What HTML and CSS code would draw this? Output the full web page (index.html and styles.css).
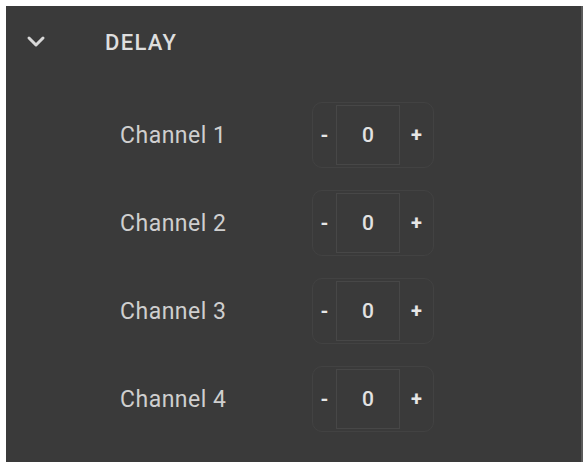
FILE: index.html
```html
<!DOCTYPE html>
<html lang="en">
<head>
<meta charset="utf-8">
<title>Delay</title>
<link rel="stylesheet" href="styles.css">
</head>
<body>
<section class="panel">
  <header class="panel-head">
    <svg class="chevron" width="20" height="14" viewBox="0 0 20 14" aria-hidden="true">
      <polyline points="3,3 10,10 17,3" fill="none" stroke="#d8d8d8" stroke-width="3" stroke-linecap="round" stroke-linejoin="round"/>
    </svg>
    <span class="panel-title">DELAY</span>
  </header>
  <div class="channels">
    <div class="channel">
      <span class="channel-name">Channel 1</span>
      <div class="stepper"><button class="step minus">-</button><span class="value">0</span><button class="step plus">+</button></div>
    </div>
    <div class="channel">
      <span class="channel-name">Channel 2</span>
      <div class="stepper"><button class="step minus">-</button><span class="value">0</span><button class="step plus">+</button></div>
    </div>
    <div class="channel">
      <span class="channel-name">Channel 3</span>
      <div class="stepper"><button class="step minus">-</button><span class="value">0</span><button class="step plus">+</button></div>
    </div>
    <div class="channel">
      <span class="channel-name">Channel 4</span>
      <div class="stepper"><button class="step minus">-</button><span class="value">0</span><button class="step plus">+</button></div>
    </div>
  </div>
</section>
</body>
</html>
```
FILE: styles.css
```css
html, body {
  margin: 0;
  padding: 0;
  background: #ffffff;
  height: 100%;
  overflow: hidden;
}

body {
  padding: 6px 2px 0 6px;
  box-sizing: border-box;
  font-family: Roboto, "Liberation Sans", sans-serif;
}

.panel {
  background: #3a3a3a;
  height: 100%;
  border-right: 2px solid #5a5a5a;
  box-sizing: border-box;
}

.panel-head {
  height: 72px;
  display: flex;
  align-items: center;
  padding-left: 20px;
}

.chevron {
  display: block;
}

.panel-title {
  margin-left: 59px;
  font-size: 22px;
  font-weight: 500;
  color: #dedede;
  letter-spacing: 1.3px;
}

.channels {
  padding-top: 13px;
}

.channel {
  height: 88px;
  display: flex;
  align-items: center;
  padding-left: 114px;
}

.channel-name {
  width: 192px;
  font-size: 23px;
  color: #cfcfcf;
  letter-spacing: 0.5px;
}

.stepper {
  display: flex;
  align-items: center;
  height: 66px;
  border: 1px solid #424242;
  border-radius: 10px;
  box-sizing: border-box;
}

.step {
  background: none;
  border: none;
  padding: 0;
  font-family: inherit;
  font-size: 20px;
  font-weight: 700;
  color: #e6e6e6;
  height: 100%;
  cursor: pointer;
}

.minus {
  width: 23px;
}

.plus {
  width: 33px;
}

.value {
  width: 64px;
  height: 60px;
  box-sizing: border-box;
  border: 1px solid #474747;
  display: flex;
  align-items: center;
  justify-content: center;
  font-size: 21px;
  font-weight: 500;
  color: #e2e2e2;
}
```
